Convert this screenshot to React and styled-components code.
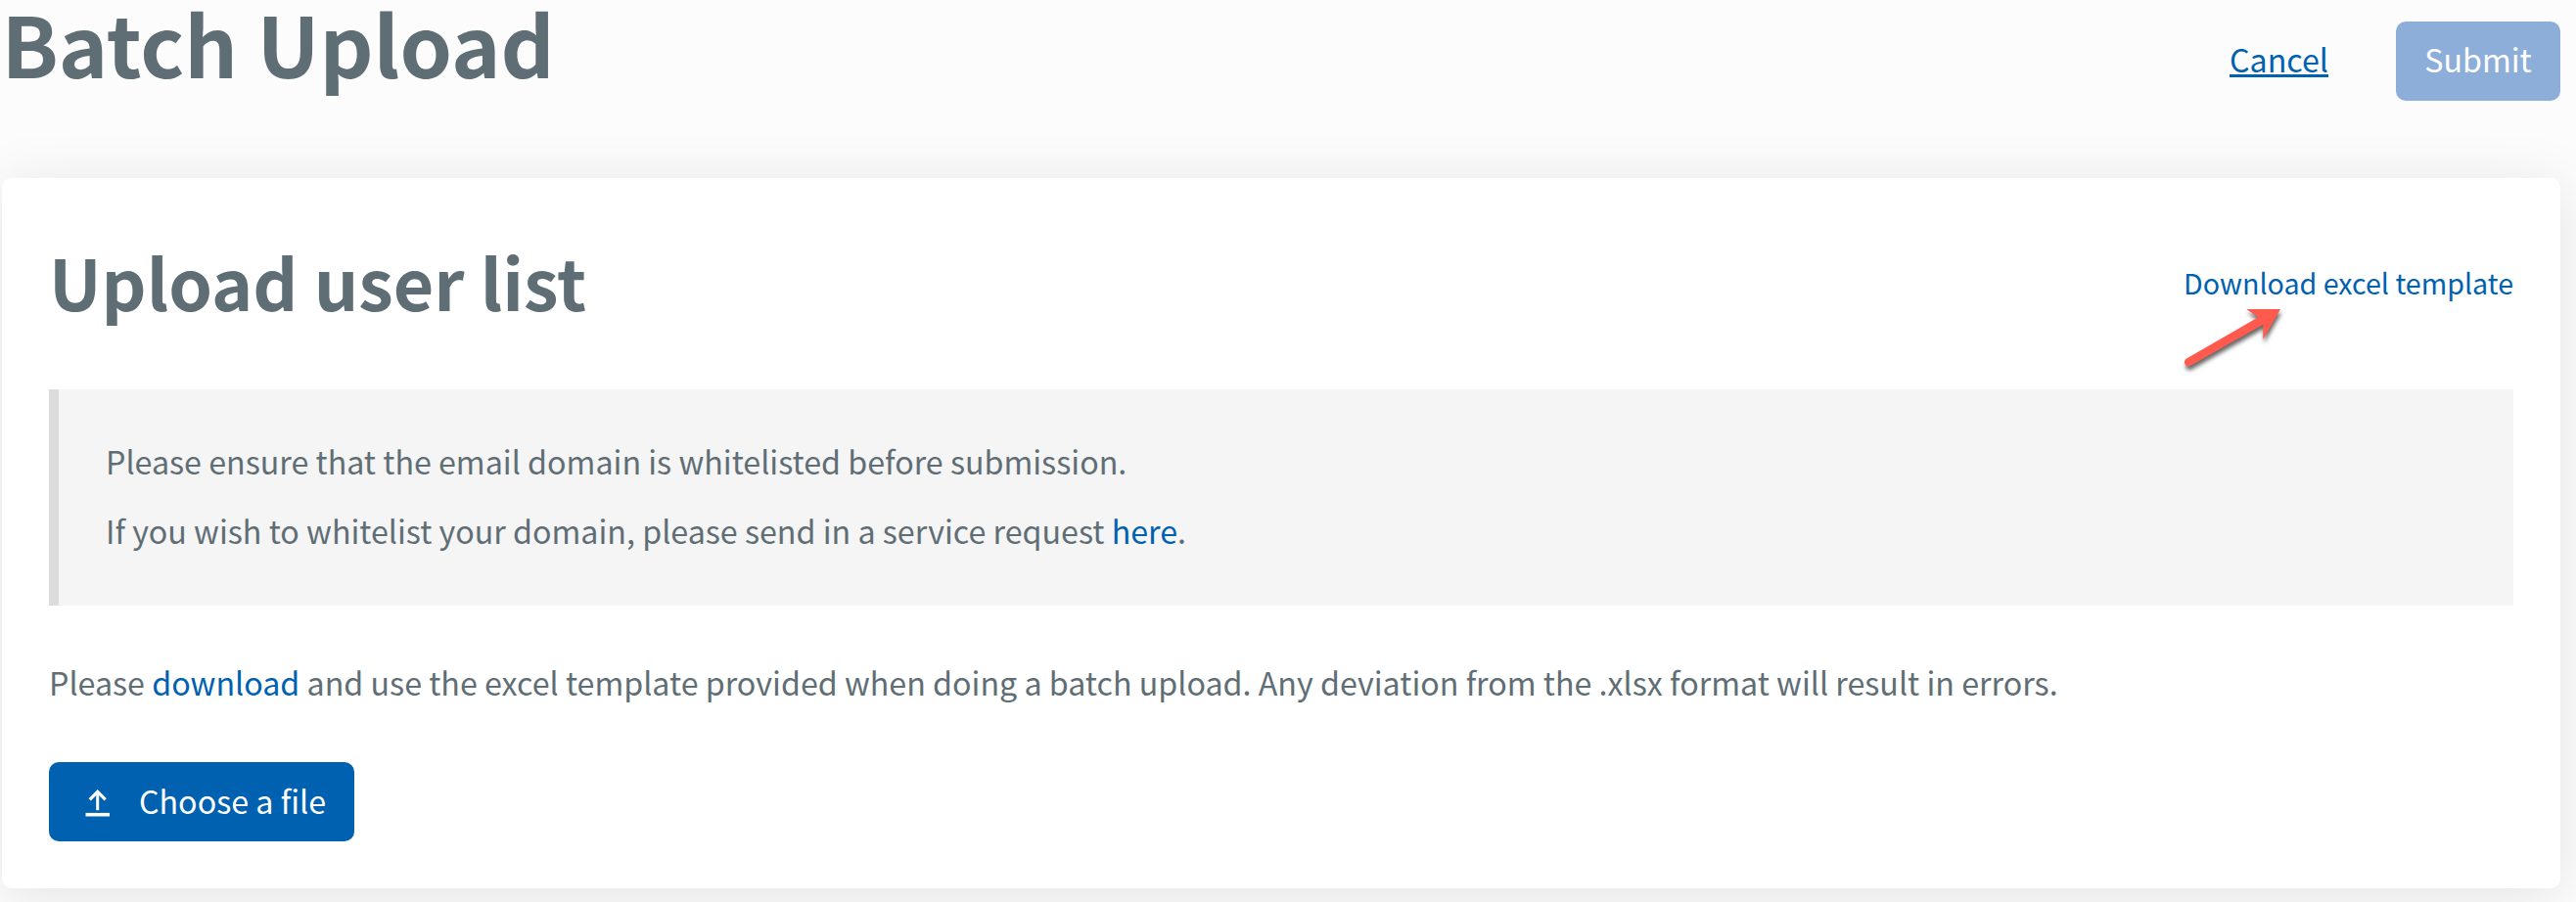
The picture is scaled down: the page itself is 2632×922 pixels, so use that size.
import React from "react";
import styled, { createGlobalStyle } from "styled-components";

const color = {
  page: "#fcfcfc",
  text: "#5f6e75",
  link: "#0061b0",
  disabled: "#8daed8",
};

const GlobalStyle = createGlobalStyle`
  *, *::before, *::after { box-sizing: border-box; }
  body {
    margin: 0;
    background: ${color.page};
    color: ${color.text};
    font-family: "Noto Sans CJK SC", "Noto Sans", sans-serif;
    font-size: 32.22px;
  }
  h1, h2, p { margin: 0; }
`;

const Page = styled.main`
  width: 2632px;
  height: 922px;
  padding: 0 16px 14px 2px;
  display: flex;
  flex-direction: column;
  overflow: hidden;
`;

const PageHeader = styled.header`
  height: 182px;
  flex: none;
  display: flex;
  align-items: flex-start;
  justify-content: space-between;
`;

const PageTitle = styled.h1`
  margin-left: -0.5px;
  font-size: 85.6px;
  font-weight: 700;
  line-height: 86px;
`;

const Actions = styled.div`
  margin-top: 22px;
  display: flex;
  align-items: center;
  gap: 69px;
`;

const Link = styled.a`
  color: ${color.link};
  text-decoration: none;
`;

const CancelLink = styled(Link)`
  line-height: 76px;
  padding-bottom: 5px;
  text-decoration: underline;
  text-decoration-thickness: 3px;
  text-underline-offset: 2px;
  text-decoration-skip-ink: none;
`;

const Button = styled.button`
  width: ${(p) => p.$width}px;
  height: 81px;
  padding: ${(p) => p.$padding};
  display: flex;
  align-items: center;
  justify-content: ${(p) => (p.$withIcon ? "flex-start" : "center")};
  border: 0;
  border-radius: 10px;
  background: ${color.link};
  color: #fff;
  font: inherit;
  line-height: 76px;

  &:disabled {
    background: ${color.disabled};
  }
`;

const Card = styled.section`
  position: relative;
  height: 726px;
  padding: 53px 48px 48px;
  display: flex;
  flex-direction: column;
  align-items: stretch;
  border-radius: 10px;
  background: #fff;
  box-shadow: 0 8px 60px rgba(0, 0, 0, 0.1);
`;

const CardHeader = styled.div`
  height: 104px;
  margin-bottom: 59px;
  display: flex;
  align-items: center;
  justify-content: space-between;
`;

const CardTitle = styled.h2`
  font-size: 71.6px;
  font-weight: 700;
  line-height: 104px;
`;

const TemplateLink = styled(Link)`
  font-size: 28.65px;
  line-height: 42px;
  padding-top: 4px;
`;

const Notice = styled.div`
  height: 221px;
  padding: 38px 48px 0;
  border-left: 10px solid #dcdcdc;
  background: #f5f5f5;
  line-height: 71px;
`;

const Instructions = styled.p`
  margin-top: 42px;
  margin-bottom: 46px;
  line-height: 72px;
`;

const UploadIcon = styled.svg`
  width: 26px;
  height: 28px;
  margin: 5px 29px 0 0;
  flex: none;
`;

const Pointer = styled.svg`
  position: absolute;
  top: 134px;
  right: 286px;
  width: 116px;
  height: 72px;
  filter: drop-shadow(1px 4px 2px rgba(0, 0, 0, 0.6));
`;

export default function App() {
  return (
    <Page>
      <GlobalStyle />
      <PageHeader>
        <PageTitle>Batch Upload</PageTitle>
        <Actions>
          <CancelLink>Cancel</CancelLink>
          <Button disabled $width={168} $padding="0 0 5px">Submit</Button>
        </Actions>
      </PageHeader>
      <Card>
        <CardHeader>
          <CardTitle>Upload user list</CardTitle>
          <TemplateLink>Download excel template</TemplateLink>
        </CardHeader>
        <Notice>
          <p>Please ensure that the email domain is whitelisted before submission.</p>
          <p>
            If you wish to whitelist your domain, please send in a service request <Link>here</Link>.
          </p>
        </Notice>
        <Instructions>
          Please <Link>download</Link> and use the excel template provided when doing a batch
          upload. Any deviation from the .xlsx format will result in errors.
        </Instructions>
        <Button $withIcon $width={312} $padding="0 0 3px 37px">
          <UploadIcon viewBox="0 0 26 28" fill="none" stroke="#fff">
            <path d="M0.5 25.7H25" strokeWidth="3.6" />
            <path d="M12.7 21.2V3" strokeWidth="3" />
            <path d="M4.7 10.3L12.7 2.3L20.7 10.3" strokeWidth="3.2" />
          </UploadIcon>
          Choose a file
        </Button>
        <Pointer viewBox="0 0 116 72">
          <path
            d="M81.3 0H116L98.3 30.7V15.7L24.3 57.8A4.2 4.2 0 0 1 20.1 50.5L93.3 8.3Z"
            fill="#ff5a4d"
          />
        </Pointer>
      </Card>
    </Page>
  );
}
